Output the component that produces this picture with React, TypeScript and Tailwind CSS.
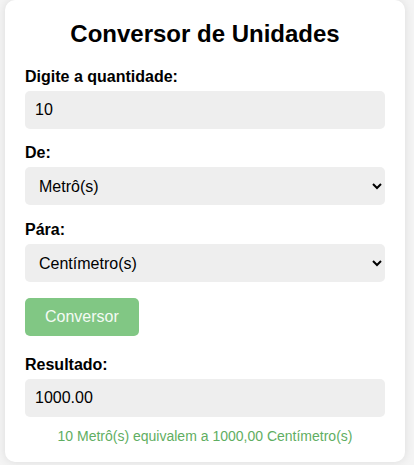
import React, { useState } from 'react';

const units: Record<string, { label: string; factor: number }> = {
  m: { label: 'Metrô(s)', factor: 1 },
  cm: { label: 'Centímetro(s)', factor: 0.01 },
  mm: { label: 'Milímetro(s)', factor: 0.001 },
  km: { label: 'Quilômetro(s)', factor: 1000 },
};

export default function App() {
  const [amount, setAmount] = useState('10');
  const [from, setFrom] = useState('m');
  const [to, setTo] = useState('cm');
  const [result, setResult] = useState<number | null>(1000);

  const convert = () => {
    const n = parseFloat(amount);
    if (isNaN(n)) return;
    setResult((n * units[from].factor) / units[to].factor);
  };

  const fieldClass =
    'w-full h-[38px] rounded-[5px] bg-[#eeeeee] px-[10px] text-[16px] text-black outline-none';
  const labelClass = 'mb-[5px] block text-[16px] leading-[18px] font-bold text-black';

  return (
    <div className="min-h-[465px] bg-[#f4f4f4] pl-[5px] font-['Liberation_Sans',Arial,sans-serif]">
      <div className="w-[400px] rounded-[10px] bg-white px-5 pt-5 pb-[18px] shadow-[0_0_10px_rgba(0,0,0,0.1)]">
        <h2 className="mb-5 text-center text-[24px] leading-[28px] font-bold text-black">Conversor de Unidades</h2>

        <label className={labelClass}>Digite a quantidade:</label>
        <input
          type="text"
          value={amount}
          onChange={(e) => setAmount(e.target.value)}
          className={`${fieldClass} mb-[15px]`}
        />

        <label className={labelClass}>De:</label>
        <select value={from} onChange={(e) => setFrom(e.target.value)} className={`${fieldClass} mb-4`}>
          {Object.entries(units).map(([k, u]) => (
            <option key={k} value={k}>{u.label}</option>
          ))}
        </select>

        <label className={labelClass}>Pára:</label>
        <select value={to} onChange={(e) => setTo(e.target.value)} className={`${fieldClass} mb-4`}>
          {Object.entries(units).map(([k, u]) => (
            <option key={k} value={k}>{u.label}</option>
          ))}
        </select>

        <button
          type="button"
          onClick={convert}
          className="mb-5 block h-[38px] rounded-[5px] bg-[#81c784] px-5 text-[16px] text-[#f4fbf4]"
        >
          Conversor
        </button>

        <label className={labelClass}>Resultado:</label>
        <div className="flex h-[38px] w-full items-center rounded-[5px] bg-[#eeeeee] px-[10px] text-[16px] text-black">
          {result !== null ? result.toFixed(2) : ''}
        </div>
        <p className="mt-[11px] text-center text-[14px] leading-[16px] text-[#5fae62]">
          {amount} {units[from].label} equivalem a {result !== null ? result.toFixed(2).replace('.', ',') : ''} {units[to].label}
        </p>
      </div>
    </div>
  );
}
